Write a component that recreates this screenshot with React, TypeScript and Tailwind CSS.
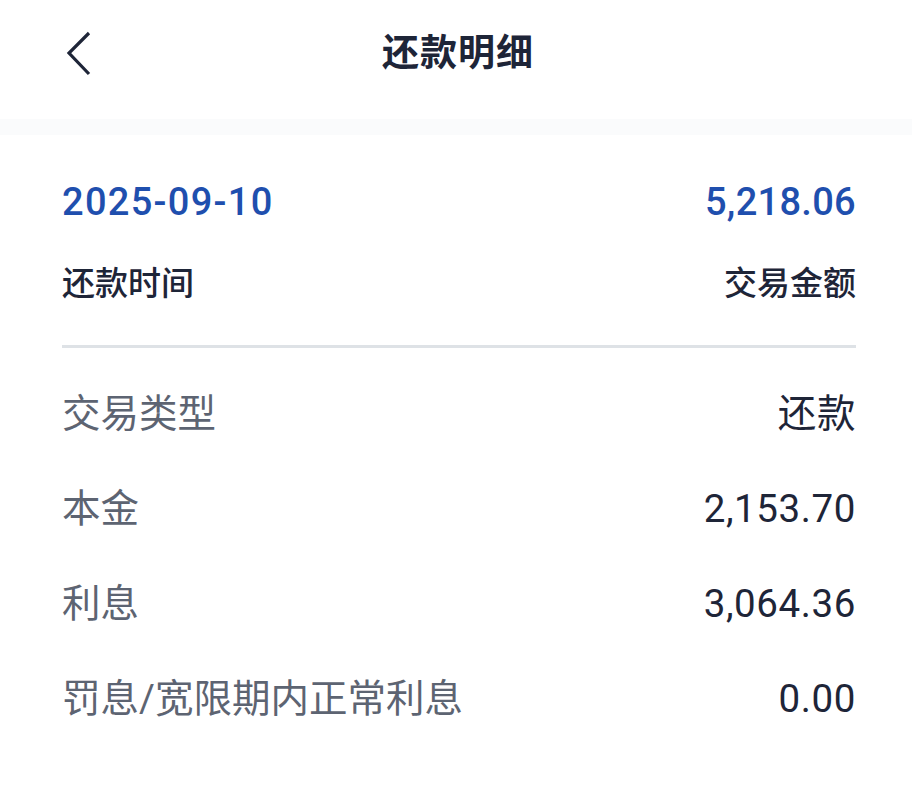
import React from "react";

const rows = [
  { label: "交易类型", value: "还款" },
  { label: "本金", value: "2,153.70" },
  { label: "利息", value: "3,064.36" },
  { label: "罚息/宽限期内正常利息", value: "0.00" },
];

export default function App() {
  return (
    <div
      className="w-[912px] h-[788px] bg-white overflow-hidden"
      style={{ fontFamily: "Roboto, 'Noto Sans CJK SC', sans-serif" }}
    >
      <div className="h-[119px] grid grid-cols-[1fr_auto_1fr] items-center px-[62px] pb-[12px]">
        <div className="flex items-center">
          <svg width="30" height="46" viewBox="0 0 30 46" className="ml-[2px]">
            <path d="M25 2 L5 22 L25 43" fill="none" stroke="#1e2538" strokeWidth="3.2" strokeLinecap="butt" />
          </svg>
        </div>
        <div className="text-[37px] font-bold text-[#1e2538] tracking-[1px] pl-[4px]">还款明细</div>
        <div />
      </div>
      <div className="h-4 bg-[#fafbfc]" />
      <div className="pl-[62px] pr-[56px]">
        <div className="pt-[44px] flex justify-between items-center h-[90px] text-[38px] font-medium text-[#1f4fae]">
          <span className="tracking-[1.3px]">2025-09-10</span>
          <span className="tracking-[0.3px]">5,218.06</span>
        </div>
        <div className="mt-[39px] flex justify-between items-center h-[40px] text-[33px] font-medium text-[#1e2538]">
          <span>还款时间</span>
          <span>交易金额</span>
        </div>
        <div className="mt-[41px] h-[3px] bg-[#dee2e6]" />
        <div className="mt-[18px]">
          {rows.map((r) => (
            <div key={r.label} className="h-[95px] flex justify-between items-center">
              <span className="text-[38.5px] text-[#5d6472]">{r.label}</span>
              <span className="text-[38.5px] text-[#1e2538] tracking-[0.6px]">{r.value}</span>
            </div>
          ))}
        </div>
      </div>
    </div>
  );
}
